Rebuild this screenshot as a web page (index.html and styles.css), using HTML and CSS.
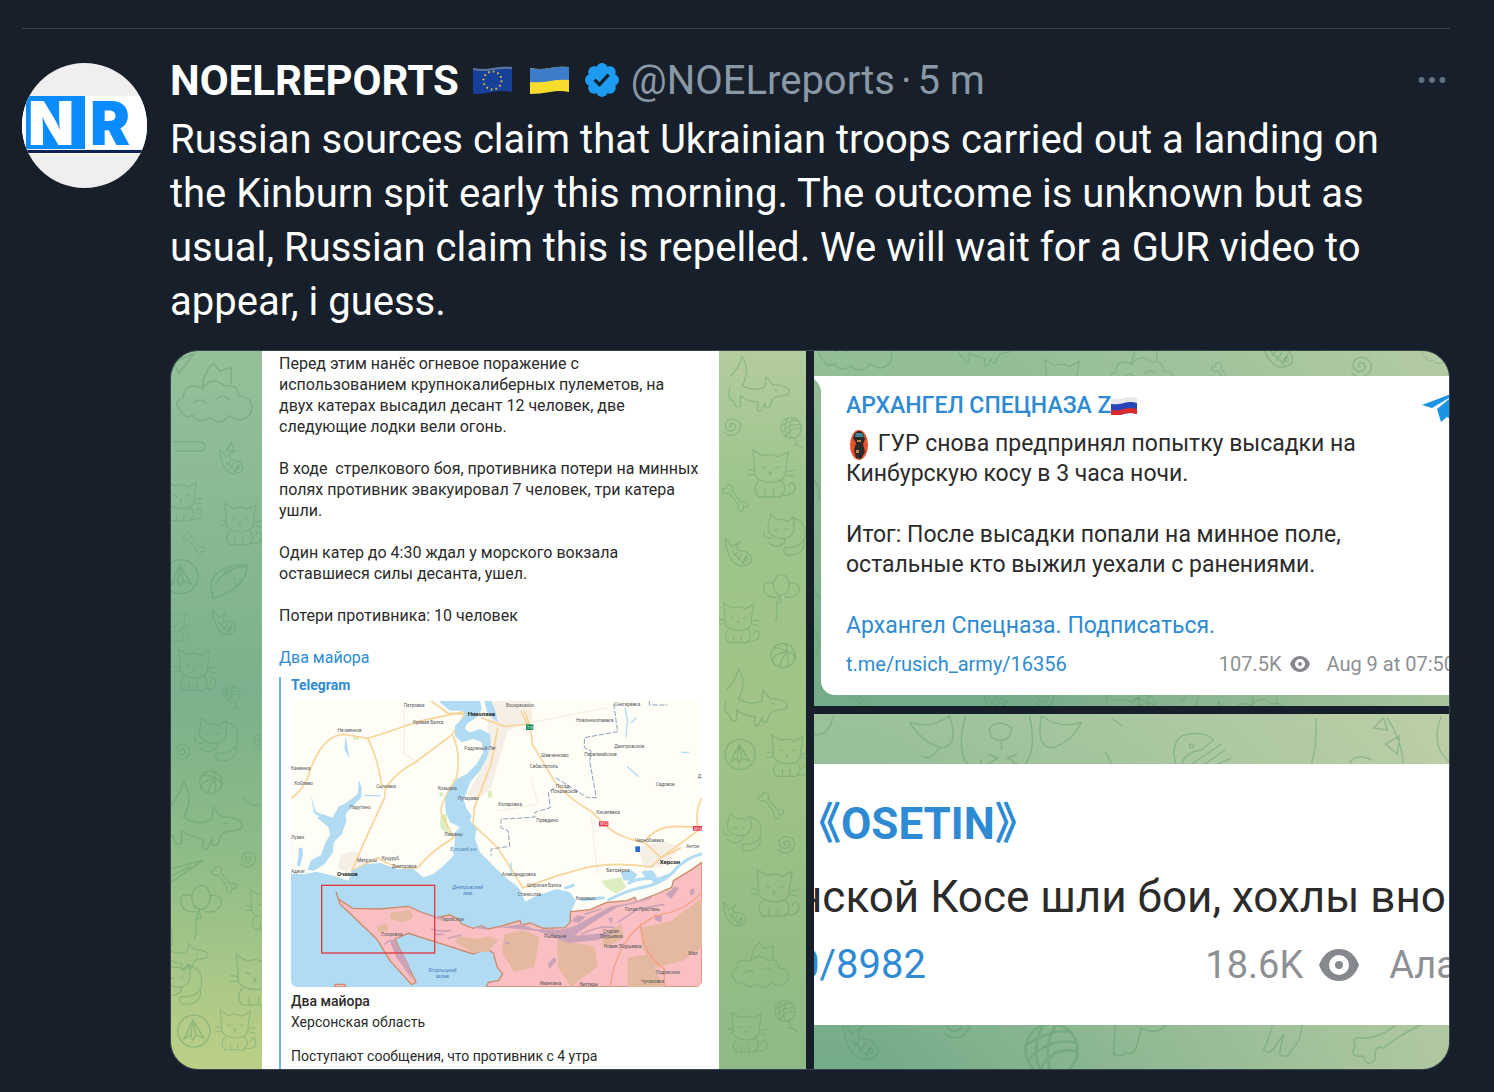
FILE: index.html
```html
<!DOCTYPE html>
<html lang="en">
<head>
  <meta charset="UTF-8" />
  <meta name="viewport" content="width=device-width, initial-scale=1.0" />
  <title>NOELREPORTS</title>
  <link rel="stylesheet" href="styles.css">
</head>
<body>
  <!-- doodles of the chat wallpaper -->
  <svg class="defs" width="0" height="0" aria-hidden="true">
    <symbol id="cat" viewBox="0 0 60 60" overflow="visible">
      <path d="M12 24 L10 6 L22 13 Q31 9 39 14 L51 8 L48 27 Q50 40 36 43 Q18 45 12 34 Z M20 25 l5 2 M36 27 l5 -2 M28 31 q2 3 4 0 M30 33 v3 M4 28 l9 2 M3 35 l9 -1 M50 31 l9 -2 M49 35 l9 2"/>
      <path d="M17 42 Q8 52 17 60 H42 Q52 50 42 41 M42 58 Q62 60 58 46 Q54 40 51 48 M24 60 v-9 M34 60 v-9"/>
    </symbol>
    <symbol id="curl" viewBox="0 0 60 60" overflow="visible">
      <path d="M10 22 L14 5 L23 12 Q30 10 35 14 L44 8 L44 26 Q40 38 26 36 Q12 34 10 22 M40 9 Q62 12 58 36 Q52 50 32 48 M16 36 Q2 36 5 28 M10 40 Q20 52 32 42 Q36 36 26 36 M32 48 Q28 58 40 58 Q60 56 57 38 M18 24 q3 3 6 0 M31 24 q3 2 5 -1"/>
    </symbol>
    <symbol id="dog" viewBox="0 0 70 60" overflow="visible">
      <path d="M0 24 Q10 14 14 0 Q24 16 14 34 Q28 42 40 36 L42 24 L50 34 Q58 32 68 38 Q72 44 64 46 Q50 46 48 54 L46 60 Q40 62 41 54 L36 64 Q30 66 33 54 Q18 52 12 46 L12 58 Q6 62 4 52 Q-4 50 0 36 M52 39 l3 1"/>
    </symbol>
    <symbol id="ball" viewBox="0 0 30 30" overflow="visible">
      <circle cx="15" cy="15" r="14"/>
      <path d="M20 10 Q8 4 4 7 M20 10 Q6 12 2 20 M20 10 Q12 20 11 28 M20 10 Q22 20 20 28 M20 10 Q28 12 29 18 M20 10 Q20 4 17 1"/>
    </symbol>
    <symbol id="yarn" viewBox="0 0 30 30" overflow="visible">
      <circle cx="15" cy="15" r="14"/>
      <path d="M2 12 Q14 4 24 5 M3 20 Q14 8 28 11 M8 27 Q16 12 29 16 M10 3 Q4 14 9 26 M17 2 Q10 14 15 28 M18 28 Q26 34 20 38 Q28 38 32 44"/>
    </symbol>
    <symbol id="spiral" viewBox="0 0 24 24" overflow="visible">
      <path d="M2 18 Q10 26 19 19 Q26 10 18 4 Q8 0 4 8 Q3 16 11 17 Q18 15 15 9 Q10 6 9 11 Q10 13 12 12"/>
    </symbol>
    <symbol id="bone" viewBox="0 0 40 40" overflow="visible">
      <path d="M12 14 Q2 16 3 8 Q6 6 8 9 Q7 1 13 3 Q19 6 16 11 L28 26 Q38 24 37 31 Q34 34 31 31 Q32 40 26 37 Q22 34 24 29 Z"/>
    </symbol>
    <symbol id="fish" viewBox="0 0 40 40" overflow="visible">
      <path d="M4 2 L12 12 L22 5 Q16 9 18 16 Q36 16 34 30 Q22 40 12 28 Q4 18 4 2 M12 18 L28 34 M18 18 L14 23 M24 19 L18 28 M30 21 L23 32"/>
      <circle cx="28" cy="27" r="2"/>
    </symbol>
    <symbol id="plane" viewBox="0 0 34 34" overflow="visible">
      <circle cx="17" cy="17" r="16"/>
      <path d="M16 6 L7 25 L14 21 L16 26 L19 21 L27 24 Z M16 6 L14 21 M16 6 L19 21"/>
    </symbol>
    <symbol id="balloons" viewBox="0 0 50 60" overflow="visible">
      <ellipse cx="24" cy="14" rx="10" ry="13"/>
      <path d="M14 12 Q0 8 2 20 Q6 32 20 29 M34 12 Q48 10 46 22 Q40 32 28 29 M22 28 l-4 10 l6 -2 z M18 38 Q20 48 17 60"/>
    </symbol>
    <symbol id="cloud" viewBox="0 0 80 60" overflow="visible">
      <path d="M4 40 Q-6 30 6 26 Q8 8 26 16 Q36 2 50 14 Q62 10 64 24 Q82 26 76 42 Q66 54 54 44 Q44 56 34 46 Q22 54 16 44 Q8 48 4 40 M16 32 q8 -8 14 0 M40 28 q8 -8 14 0 M26 16 Q28 -4 38 -10 L44 -2 L56 -6 L56 12"/>
    </symbol>
  </svg>

  <main class="timeline">
    <article class="tweet">
      <a class="avatar" href="#" aria-label="NOELREPORTS">
        <svg viewBox="0 0 125 125">
          <rect width="125" height="125" fill="#efefef"/>
          <rect y="33" width="125" height="53" fill="#fff"/>
          <rect x="4" y="33" width="59" height="53" fill="#0a8cff"/>
          <rect y="87" width="125" height="3" fill="#0b2454"/>
          <rect y="90" width="125" height="1" fill="#fff"/>
          <text class="logo" x="6" y="82" fill="#fff">N</text>
          <text class="logo" x="68" y="82" fill="#0a8cff">R</text>
        </svg>
      </a>

      <div class="body">
        <header class="head">
          <a class="name" href="#">NOELREPORTS</a>
          <svg class="flag" viewBox="0 0 39 28" role="img" aria-label="EU">
            <path d="M0 2 Q10 4 20 2 T39 1 V26 Q30 24 20 26 T0 28 Z" fill="#17409a"/>
            <path d="M0 2 Q10 4 20 2 T39 1 V3 Q30 2 20 4 T0 4 Z" fill="#5d7698"/>
            <circle cx="19.500" cy="14.500" r="9" fill="none" stroke="#e3c33c" stroke-width="2" stroke-dasharray="1.600 3.112"/>
          </svg>
          <svg class="flag" viewBox="0 0 39 28" role="img" aria-label="Ukraine">
            <path d="M0 2 Q10 4 20 2 T39 1 V26 Q30 24 20 26 T0 28 Z" fill="#f7dc2e"/>
            <path d="M0 2 Q10 4 20 2 T39 1 V14 Q30 13 20 15 T0 16 Z" fill="#3c7cc8"/>
          </svg>
          <svg class="badge" viewBox="1.75 1.75 20.5 20.5" role="img" aria-label="Verified">
            <path fill="#1d9bf0" d="M22.25 12c0-1.43-.88-2.67-2.19-3.34.46-1.39.2-2.9-.81-3.91s-2.52-1.27-3.91-.81c-.66-1.31-1.91-2.19-3.34-2.19s-2.67.88-3.33 2.19c-1.4-.46-2.91-.2-3.92.81s-1.26 2.52-.8 3.91c-1.31.67-2.2 1.91-2.2 3.34s.89 2.67 2.2 3.34c-.46 1.39-.21 2.9.8 3.91s2.52 1.26 3.91.81c.67 1.31 1.91 2.19 3.34 2.19s2.68-.88 3.34-2.19c1.39.45 2.9.2 3.91-.81s1.27-2.52.81-3.91c1.31-.67 2.19-1.91 2.19-3.34zm-11.71 4.2L6.8 12.46l1.41-1.42 2.26 2.26 4.8-5.23 1.47 1.36-6.2 6.77z"/>
          </svg>
          <a class="handle" href="#">@NOELreports</a>
          <span class="dot">·</span>
          <time class="age">5 m</time>
          <button class="more" type="button" aria-label="More">
            <svg viewBox="0 0 28 8"><circle cx="3.500" cy="4" r="3"/><circle cx="14" cy="4" r="3"/><circle cx="24.500" cy="4" r="3"/></svg>
          </button>
        </header>

        <p class="text">Russian sources claim that Ukrainian troops carried out a landing on<br>the Kinburn spit early this morning. The outcome is unknown but as<br>usual, Russian claim this is repelled. We will wait for a GUR video to<br>appear, i guess.</p>

        <div class="media">
          <section class="shot shot-long">
            <svg class="doodles" viewBox="0 0 636 719" preserveAspectRatio="xMidYMid slice" aria-hidden="true">
              <use href="#cloud" x="6" y="22" width="78" height="58"/>
              <path d="M2 12 L24 2 L8 22 Z M4 100 h28 q5 -6 -2 -9 h-28 M60 92 l4 8 h-8 z"/>
              <use href="#fish" x="46" y="92" width="30" height="40"/>
              <use href="#cat" x="-16" y="126" width="52" height="44"/>
              <use href="#cat" x="46" y="142" width="46" height="58"/>
              <use href="#bone" x="10" y="180" width="26" height="26"/>
              <use href="#plane" x="-8" y="208" width="36" height="36"/>
              <path d="M40 234 Q44 214 76 214 Q78 236 42 248 Z M44 234 Q56 216 74 216"/>
              <use href="#bone" x="52" y="216" width="20" height="20"/>
              <use href="#fish" x="38" y="258" width="32" height="30"/>
              <use href="#cat" x="-14" y="254" width="34" height="40"/>
              <use href="#cat" x="0" y="292" width="46" height="50"/>
              <use href="#yarn" x="52" y="334" width="18" height="18"/>
              <use href="#curl" x="20" y="362" width="48" height="52"/>
              <use href="#spiral" x="2" y="392" width="18" height="18"/>
              <use href="#spiral" x="80" y="382" width="18" height="18"/>
              <use href="#ball" x="28" y="420" width="24" height="24"/>
              <use href="#dog" x="-2" y="426" width="74" height="74"/>
              <path d="M-6 520 L32 510 L0 532 Z M0 526 L20 516 M72 448 q8 10 22 6"/>
              <use href="#spiral" x="68" y="500" width="18" height="18"/>
              <use href="#bone" x="38" y="514" width="30" height="30"/>
              <use href="#balloons" x="8" y="534" width="46" height="56"/>
              <use href="#cat" x="72" y="530" width="44" height="54"/>
              <use href="#dog" x="-14" y="576" width="54" height="42"/>
              <use href="#cat" x="56" y="598" width="56" height="58"/>
              <use href="#curl" x="-18" y="608" width="52" height="48"/>
              <use href="#plane" x="6" y="664" width="34" height="34"/>
              <use href="#cat" x="42" y="644" width="44" height="68"/>

              <use href="#dog" x="560" y="4" width="60" height="54"/>
              <use href="#spiral" x="552" y="66" width="20" height="20"/>
              <use href="#yarn" x="610" y="66" width="22" height="22"/>
              <use href="#cat" x="574" y="90" width="52" height="60"/>
              <use href="#bone" x="550" y="132" width="30" height="30"/>
              <use href="#curl" x="590" y="158" width="46" height="50"/>
              <use href="#fish" x="552" y="186" width="34" height="34"/>
              <use href="#balloons" x="592" y="222" width="40" height="50"/>
              <use href="#cat" x="546" y="242" width="44" height="56"/>
              <use href="#ball" x="600" y="292" width="26" height="26"/>
              <use href="#dog" x="556" y="318" width="62" height="54"/>
              <use href="#plane" x="554" y="388" width="32" height="32"/>
              <use href="#cat" x="594" y="376" width="46" height="54"/>
              <use href="#bone" x="586" y="440" width="30" height="30"/>
              <use href="#curl" x="550" y="456" width="42" height="50"/>
              <use href="#spiral" x="606" y="484" width="20" height="20"/>
              <use href="#cat" x="578" y="512" width="52" height="56"/>
              <use href="#fish" x="550" y="548" width="30" height="34"/>
              <use href="#cloud" x="556" y="600" width="70" height="44"/>
              <use href="#yarn" x="604" y="650" width="22" height="22"/>
              <use href="#cat" x="554" y="652" width="44" height="56"/>
            </svg>
            <div class="note">
              <p>Перед этим нанёс огневое поражение с<br>использованием крупнокалиберных пулеметов, на<br>двух катерах высадил десант 12 человек, две<br>следующие лодки вели огонь.</p>
              <p>В ходе&nbsp; стрелкового боя, противника потери на минных<br>полях противник эвакуировал 7 человек, три катера<br>ушли.</p>
              <p>Один катер до 4:30 ждал у морского вокзала<br>оставшиеся силы десанта, ушел.</p>
              <p>Потери противника: 10 человек</p>
              <p><a href="#">Два майора</a></p>
              <blockquote class="preview">
                <a class="site" href="#">Telegram</a>
                <svg class="map" viewBox="0 0 1233 858" role="img" aria-label="Map">
                  <rect width="1233" height="858" fill="#fefdf6"/>
                  <path fill="#f6efe6" d="M590 0 L720 0 L725 60 L650 90 L600 260 L560 300 L530 280 L590 170 Z M140 500 L150 460 L190 450 L230 480 L180 520 Z M1040 440 L1120 420 L1170 440 L1110 500 L1060 500 Z"/>
                  <path fill="#dcedc0" d="M448 342 l18 -4 l6 50 l10 16 l-16 -6 l-18 -20 z M186 108 h18 v8 h-18 z M930 540 l60 -12 l16 30 l-30 20 l-30 -18 z M590 272 l12 -4 l2 20 l-12 4 z M444 276 l10 -4 l4 12 l-10 4 z"/>

                  <g class="road minor">
                    <path d="M340 20 V160 L390 190 M640 80 L950 20 M900 340 L920 520 M620 330 L740 310 L720 230 M0 400 V470"/>
                  </g>
                  <g class="road">
                    <path d="M0 292 Q34 270 50 230 Q90 100 160 100 L230 112 Q300 90 380 62 L520 32"/>
                    <path d="M230 112 Q260 170 272 252 L284 260 L280 292 L230 400 L182 510"/>
                    <path d="M284 260 Q320 210 370 186 L484 100 L522 40 L470 36 L420 0"/>
                    <path d="M484 100 Q512 160 496 230 Q440 320 452 340 L488 410 Q420 450 380 500 Q320 510 260 470 L182 510"/>
                    <path d="M570 50 L640 76 L710 70 L690 30 M620 80 L600 190 L550 320 L546 370 L620 440 L696 560 L800 524 L870 504 Q960 480 1080 498 L1110 470 L1170 440"/>
                    <path d="M700 30 Q720 70 724 130 L790 240 Q840 300 900 330 L940 370 Q980 410 1060 424 L1110 470 L1233 380 M1060 424 Q1090 376 1160 376 L1233 380 M1220 376 Q1212 330 1233 290"/>
                  </g>
                  <path class="border" d="M1075 0 V12 H1130 M968 8 L980 92 L880 110 V140 L900 150 L896 180 L916 290 L890 290 L790 228 M790 262 L772 274 L778 320 L732 334 V348 L680 352 L630 354 V380 L652 390 L656 436 L600 444 V464"/>

                  <path class="water" d="M0 519 L42 519 77 512 127 524 172 539 182 509 227 489 267 486 317 504 367 504 397 529 427 519 457 494 487 464 492 414 492 394 507 379 477 364 464 334 462 294 472 274 497 234 527 219 557 189 577 154 572 124 547 114 512 124 492 104 492 74 522 44 517 29 477 29 447 4 447 0 567 0 572 24 557 49 527 69 522 84 537 94 567 84 597 99 599 129 587 174 567 209 537 244 527 274 517 294 527 324 542 344 537 359 557 384 552 414 567 454 607 494 637 524 677 554 692 574 702 602 737 584 797 564 837 574 855 599 842 629 837 674 V858 H0 Z"/>
                  <path class="water" d="M50 506 L60 478 L90 462 L104 424 L118 400 L112 378 L78 350 L98 340 L124 350 L136 330 L142 316 L160 310 L200 280 L204 236 L212 262 L210 290 L180 320 L164 340 L166 360 L152 400 L128 424 L126 454 L100 490 L68 510 Z"/>
                  <path class="water" d="M60 284 L68 336 L92 350 L104 344 L74 332 Z M164 104 l-4 40 l16 30 l-6 -32 z M24 440 l10 0 l2 24 l-10 34 l-8 -6 l4 -26 z M580 0 L590 40 L620 64 L612 24 L600 0 Z"/>
                  <path class="stream" d="M1002 20 L1010 60 L1004 110 M1036 50 L1020 66 M1008 196 L1044 228 M1170 154 h24 M220 284 h50 M660 484 v40"/>
                  <path class="river" d="M1233 458 Q1190 470 1160 498 Q1120 550 1040 562 Q1000 572 950 598 M1010 548 Q1040 528 1110 534 M1060 510 L1090 540 L1140 520 M820 562 L850 552 M870 596 L940 590"/>
                  <path class="water" d="M990 514 l30 -8 l20 16 l-16 18 l-26 -2 z M1050 512 l34 -4 l14 18 l-28 12 z"/>

                  <path class="land" d="M135 572 L142 594 185 622 267 624 352 616 397 636 437 649 477 642 502 654 512 669 547 682 572 674 592 684 627 676 687 659 692 672 717 666 757 682 822 680 837 664 839 632 897 626 947 604 1007 599 1032 589 1037 602 1097 579 1142 559 1147 539 1197 509 1233 484 V858 H587 L592 844 622 839 635 819 619 799 612 774 607 756 587 744 547 759 437 724 352 697 312 714 375 844 362 851 297 779 257 714 147 609 Z"/>
                  <path class="land" d="M132 858 v-8 h30 v8 z"/>
                  <path class="tan" d="M300 636 l60 -10 l6 24 l-30 14 l-40 -10 z M258 676 l28 -8 l6 20 l-30 6 z M496 704 l60 10 l36 -8 l30 12 l-32 34 l-44 4 l-50 -30 z M640 700 l60 -12 l46 20 l-16 90 l-60 14 l-38 -60 z M800 716 l110 20 l10 60 l-80 62 l-40 -60 z M1050 680 l90 -20 l93 -70 v150 l-60 40 l-80 20 l-40 -60 z M1010 770 l60 -10 l50 98 h-110 z M930 700 l60 -30 l10 40 l-60 30 z"/>
                  <path class="mud" d="M296 718 l16 -2 l40 70 l12 50 l-50 -70 z M610 680 l80 -10 l40 14 l80 2 l40 -10 l110 -60 l30 -4 l-100 62 l-40 30 l120 -10 l-50 24 l-90 8 l-90 -36 l-100 -10 z M840 660 l20 -18 l24 6 l-20 18 z M1124 580 l30 -24 l10 6 l-24 32 z M1090 640 l24 4 l-4 20 l-18 -6 z M950 650 l16 0 l-4 18 z M770 790 l20 -22 l6 12 l-20 24 z M1196 566 l14 -4 v16 l-12 6 z M352 618 l52 22 l50 12 l-10 4 l-60 -24 z M549 680 l26 -6 l14 12 z"/>
                  <path class="marsh" d="M420 684 q30 10 60 4 M430 700 h30 M470 712 l40 -10 M280 730 l20 -14 M640 724 l18 4 M870 700 q60 -30 100 -20 M880 640 l50 -16 M960 620 q60 -10 120 -30 M980 664 l60 -40 l80 -14"/>
                  <path class="redroad" d="M1233 574 Q1180 630 1110 640 Q1020 670 980 770 Q962 810 958 858 M1048 668 Q1054 760 1120 804 V858"/>

                  <g class="place">
                    <text x="338" y="18">Петровка</text><text x="366" y="70">Кривая Балка</text>
                    <text x="140" y="92">Нечаянное</text><text x="0" y="208">Каменка</text>
                    <text x="10" y="252">Коблево</text><text x="256" y="260">Сычовка</text>
                    <text x="176" y="324">Парутино</text><text x="0" y="414">Лузан</text>
                    <text x="0" y="515">Аджиг.</text><text x="198" y="482">Матросы</text>
                    <text x="272" y="476">Куцуруб</text><text x="302" y="501">Дмитровка</text>
                    <text x="440" y="266">Козырка</text><text x="500" y="298">Лупарево</text>
                    <text x="460" y="406">Лиманы</text><text x="520" y="147">Радужный Ляг</text>
                    <text x="645" y="18">Воскресенск</text><text x="970" y="14">Снигирёвка</text>
                    <text x="855" y="64">Новониколаевка</text><text x="970" y="142">Дмитровское</text>
                    <text x="880" y="166">Первомайское</text><text x="750" y="168">Шевченково</text>
                    <text x="716" y="201">Себастополь</text><text x="794" y="260">Посад-</text>
                    <text x="780" y="276">Покровское</text><text x="622" y="316">Коларовка</text>
                    <text x="736" y="362">Правдино</text><text x="916" y="340">Киселёвка</text>
                    <text x="1094" y="256">Садовое</text><text x="1032" y="422">Чернобаевка</text>
                    <text x="1186" y="440">Антон</text><text x="946" y="512">Белозёрка</text>
                    <text x="632" y="526">Александровка</text><text x="708" y="559">Широкая Балка</text>
                    <text x="680" y="584">Станислав</text><text x="854" y="598">Кизомыс</text>
                    <text x="450" y="659">Геройское</text><text x="270" y="704">Покровка</text>
                    <text x="760" y="712">Рыбальче</text><text x="936" y="696">Старая</text>
                    <text x="926" y="712">Збурьевка</text><text x="938" y="742">Новая Збурьевка</text>
                    <text x="1002" y="631">Голая Пристань</text><text x="1192" y="762">Мал</text>
                    <text x="1094" y="818">Подлесное</text><text x="1050" y="846">Чулаковка</text>
                    <text x="746" y="853">Ивановка</text><text x="866" y="854">Бехтеры</text>
                    <text x="1220" y="232">Д</text>
                  </g>
                  <g class="city">
                    <text x="530" y="46">Николаев</text><text x="138" y="524">Очаков</text><text x="1106" y="490">Херсон</text>
                  </g>
                  <g class="sea">
                    <text x="478" y="450">Бугский л-н</text><text x="484" y="564">Днепровский</text><text x="516" y="582">лим.</text>
                    <text x="412" y="812">Ягорлыцкий</text><text x="434" y="830">залив</text>
                  </g>
                  <g class="tag">
                    <rect x="705" y="70" width="22" height="17" fill="#17905c"/><text x="708" y="84">Т15</text>
                    <rect x="924" y="361" width="28" height="15" fill="#e4344a"/><text x="928" y="373">М14</text>
                    <rect x="1206" y="375" width="27" height="14" fill="#e4344a"/><text x="1210" y="386">М14</text>
                    <rect x="1033" y="436" width="14" height="17" fill="#2a67cf"/>
                  </g>
                  <rect class="area" x="92" y="553" width="339" height="203"/>
                </svg>
                <strong>Два майора</strong>
                <p>Херсонская область</p>
                <p class="last">Поступают сообщения, что противник с 4 утра</p>
              </blockquote>
            </div>
          </section>

          <section class="shot shot-arch">
            <svg class="doodles" viewBox="0 0 636 356" preserveAspectRatio="xMidYMid slice" aria-hidden="true">
              <use href="#cloud" x="-4" y="-28" width="94" height="56"/>
              <use href="#dog" x="146" y="-36" width="54" height="50"/>
              <use href="#cat" x="222" y="4" width="52" height="50"/>
              <use href="#cloud" x="290" y="0" width="80" height="50"/>
              <use href="#bone" x="396" y="10" width="30" height="30"/>
              <use href="#fish" x="440" y="-18" width="50" height="40"/>
              <use href="#spiral" x="536" y="4" width="24" height="24"/>
              <use href="#cloud" x="606" y="-20" width="60" height="40"/>
              <path d="M0 130 q8 8 4 20 M0 240 l6 8 M0 280 q8 10 2 24"/>
              <use href="#bone" x="34" y="338" width="30" height="30"/>
              <use href="#fish" x="166" y="334" width="34" height="34"/>
              <use href="#spiral" x="220" y="336" width="22" height="22"/>
              <use href="#cat" x="284" y="340" width="50" height="50"/>
              <use href="#ball" x="318" y="344" width="26" height="26"/>
              <use href="#dog" x="366" y="330" width="66" height="54"/>
              <use href="#cloud" x="410" y="342" width="80" height="50"/>
            </svg>
            <div class="card">
              <svg class="tail" viewBox="0 0 8 24" aria-hidden="true"><path d="M0 0 H8 V24 Q8 8 0 3 Z" fill="#fff"/></svg>
              <div class="row">
                <h3><a href="#">АРХАНГЕЛ СПЕЦНАЗА Z</a></h3>
                <svg class="ru" viewBox="0 0 26 18" role="img" aria-label="Russia">
                  <path d="M0 1 Q7 3 13 1 T26 1 V17 Q19 15 13 17 T0 18 Z" fill="#e8e8ec"/>
                  <path d="M0 7 Q7 8 13 6 T26 6 V17 Q19 15 13 17 T0 18 Z" fill="#2545b8"/>
                  <path d="M0 13 Q7 14 13 12 T26 12 V17 Q19 15 13 17 T0 18 Z" fill="#d92b2b"/>
                </svg>
                <svg class="tg" viewBox="0 0 42 34" role="img" aria-label="Telegram"><path fill="#1c93e3" d="M0 16 L42 0 L36 34 L25 28 L19 33 L15 20 L32 6 L10 19 Z"/></svg>
              </div>
              <p><svg class="patch" viewBox="0 0 18 30" aria-hidden="true">
                  <ellipse cx="9" cy="15" rx="9" ry="15" fill="#e8502d"/>
                  <path d="M5 3 Q9 -1 13 3 L15 9 L13 14 L15 22 L11 29 L6 28 L4 20 L6 13 L3 8 Z" fill="#2b2a28"/>
                  <path d="M6 3 h6 l2 4 h-9 z" fill="#3f8799"/><path d="M7 10 h4 v2 h-4 z M6 20 h3 v3 h-3 z" fill="#b98a52"/>
                </svg> ГУР снова предпринял попытку высадки на<br>Кинбурскую косу в 3 часа ночи.</p>
              <p>Итог: После высадки попали на минное поле,<br>остальные кто выжил уехали с ранениями.</p>
              <p><a href="#">Архангел Спецназа. Подписаться.</a></p>
              <footer class="meta">
                <a href="#">t.me/rusich_army/16356</a>
                <span class="views">107.5K</span>
                <svg class="eye" viewBox="0 0 20 16" aria-hidden="true"><path fill-rule="evenodd" d="M10 0 Q17 0 20 8 Q17 16 10 16 Q3 16 0 8 Q3 0 10 0 Z M10 3 a5 5 0 1 0 0 10 a5 5 0 1 0 0 -10 Z M10 6 a2 2 0 1 1 0 4 a2 2 0 1 1 0 -4 Z"/></svg>
                <time>Aug 9 at 07:50</time>
              </footer>
            </div>
          </section>

          <section class="shot shot-osetin">
            <svg class="doodles" viewBox="0 0 636 355" preserveAspectRatio="xMidYMid slice" aria-hidden="true">
              <path d="M0 20 q14 4 20 -18 M96 8 q20 8 40 -6 q10 30 -8 32 q-20 -6 -32 -26 M126 34 q-10 14 -18 8 M268 8 q-20 8 -40 -6 q-6 30 10 32 q20 -6 30 -26 M152 2 q-10 36 4 50 q10 4 12 -6 M216 2 q8 36 -6 50 q-8 4 -12 -6 M176 14 q10 -10 22 0 q0 12 -11 12 q-12 0 -11 -12 M188 26 v10 M174 40 l10 4 l-10 6 M204 40 l-10 4 l10 6 M298 4 l10 8 M292 38 l6 12"/>
              <path d="M362 50 Q356 22 376 20 Q392 18 400 26 L388 36 Q372 38 368 50 M378 50 l30 -20 M388 52 l24 -16 M400 52 l18 -8 M502 4 Q504 30 498 50 M560 14 l10 -10 l4 12 z M572 30 l14 -8 l-2 18 z M574 4 Q588 26 590 50 M536 50 q6 -12 22 -4 M628 2 q-12 30 8 46"/>
              <circle cx="378" cy="32" r="2"/>
              <use href="#fish" x="24" y="306" width="48" height="46"/>
              <use href="#spiral" x="128" y="296" width="30" height="30"/>
              <use href="#yarn" x="210" y="308" width="56" height="56"/>
              <path d="M302 306 l-2 34 q8 4 12 -2 q6 4 10 -2 l6 -22 q20 10 28 -10 M460 306 q-4 18 -10 30 q6 6 12 -4 l8 -12 l-4 20 q8 6 12 -4 q12 -12 10 -28"/>
              <path d="M614 308 Q590 318 570 334 Q560 330 562 346 Q552 354 550 342 Q534 344 542 332 Q536 322 550 324 Q570 324 590 304"/>
            </svg>
            <div class="card">
              <h3><a href="#">《OSETIN》</a></h3>
              <p>нской Косе шли бои, хохлы вно</p>
              <footer class="meta">
                <a href="#">0/8982</a>
                <span class="views">18.6K</span>
                <svg class="eye" viewBox="0 0 20 16" aria-hidden="true"><path fill-rule="evenodd" d="M10 0 Q17 0 20 8 Q17 16 10 16 Q3 16 0 8 Q3 0 10 0 Z M10 3 a5 5 0 1 0 0 10 a5 5 0 1 0 0 -10 Z M10 6 a2 2 0 1 1 0 4 a2 2 0 1 1 0 -4 Z"/></svg>
                <span>Ала</span>
              </footer>
            </div>
          </section>
        </div>
      </div>
    </article>
  </main>
</body>
</html>
```

FILE: styles.css
```css
* { box-sizing: border-box; }
body {
  margin: 0;
  background: #17202a;
  color: #fff;
  font-family: Roboto, "Noto Sans CJK SC", sans-serif;
}
a { color: inherit; text-decoration: none; }
p, h3, blockquote { margin: 0; }
svg { display: block; }
.defs { position: absolute; }

.timeline { padding: 28px 44px 22px 22px; }
.tweet {
  display: flex;
  gap: 23px;
  padding-top: 24px;
  border-top: 1px solid #38444d;
}
.avatar {
  flex: none;
  width: 125px;
  height: 125px;
  margin-top: 10px;
  border-radius: 50%;
  overflow: hidden;
}
.logo { font: 900 60px Inter, sans-serif; }
.body { flex: 1; min-width: 0; }

.head {
  display: flex;
  align-items: center;
  height: 54px;
  font-size: 40px;
  white-space: nowrap;
  color: #8b98a5;
}
.name { font-size: 42px; font-weight: 700; color: #fff; margin-right: 14px; }
.flag { width: 39px; height: 28px; margin-right: 18px; }
.badge { width: 34px; height: 34px; margin-right: 12px; }
.flag + .badge { margin-left: -2px; }
.dot { margin: 0 6px; }
.more {
  margin-left: auto;
  padding: 8px 4px;
  background: none;
  border: none;
  cursor: pointer;
}
.more svg { width: 28px; height: 8px; fill: #5f7080; }
.text {
  margin-top: 6px;
  font-size: 40px;
  line-height: 54px;
  white-space: nowrap;
}

.media {
  display: grid;
  grid-template-columns: 1fr 1fr;
  grid-template-rows: 1fr 1fr;
  gap: 8px;
  aspect-ratio: 16 / 9;
  margin-top: 21px;
  border: 1px solid #38444d;
  border-radius: 28px;
  overflow: hidden;
}
.shot {
  display: grid;
  min-width: 0;
  min-height: 0;
  overflow: hidden;
  color: #2b2b2b;
}
.shot > * { grid-area: 1 / 1; min-width: 0; min-height: 0; }
.shot a { color: #2e8bd3; }
.doodles {
  width: 100%;
  height: 100%;
  fill: none;
  stroke: #5d9c6c;
  stroke-opacity: 0.4;
  stroke-width: 1.5px;
}

/* long post with the map */
.shot-long {
  grid-row: 1 / 3;
  background:
    linear-gradient(180deg, #95c09a 0%, #7bb18c 48%, #8fbc88 70%, #bcd087 100%) left / 50% 100% no-repeat,
    linear-gradient(180deg, #b4cc9e 0%, #9dc48c 20%, #a2c486 50%, #8fb985 100%) right / 50% 100% no-repeat;
}
.note {
  margin: 0 87px 0 91px;
  padding: 2px 17px 0;
  background: #fff;
  font-size: 16px;
  line-height: 21px;
  white-space: nowrap;
  overflow: hidden;
}
.note > p { margin-bottom: 21px; }
.note > p:nth-of-type(5) { margin-bottom: 9px; }
.preview {
  padding-left: 10px;
  border-left: 2px solid #6cb2ec;
  font-size: 14px;
}
.site { display: block; font-weight: 700; line-height: 16px; }
.map { width: 100%; margin: 8px 0 4px; border-radius: 6px; }
.preview strong { display: block; font-weight: 500; line-height: 21px; }
.preview .last { margin-top: 13px; padding-bottom: 20px; }

.road { fill: none; stroke: #f6d49a; stroke-width: 5; }
.minor { stroke: #f7f0e0; stroke-width: 4; }
.border { fill: none; stroke: #8ea2b8; stroke-width: 3; stroke-dasharray: 16 5; }
.water { fill: #b0dbf3; }
.river, .stream { fill: none; stroke: #b0dbf3; stroke-width: 9; }
.stream { stroke-width: 4; }
.land { fill: #f9bfc2; stroke: #cc8a68; stroke-width: 4; }
.tan { fill: #e5b9a0; }
.mud { fill: #cba3b8; }
.marsh { fill: none; stroke: #cba3b8; stroke-width: 5; }
.redroad { fill: none; stroke: #f7a184; stroke-width: 4; }
.place, .city, .sea { font-size: 14px; fill: #55585c; }
.city { font-size: 18px; font-weight: 700; fill: #222; }
.sea { font-size: 15px; font-style: italic; fill: #4a83bd; }
.tag { font-size: 11px; fill: #fff; }
.area { fill: none; stroke: #e0393f; stroke-width: 4; }

/* cropped channel posts */
.card { background: #fff; white-space: nowrap; }
.card h3 { font-weight: 500; }
.meta { display: flex; align-items: center; color: #8d9094; }
.meta .views { margin-left: auto; }
.eye { fill: #85888c; }

.shot-arch {
  background: linear-gradient(90deg, rgba(201, 212, 172, 0) 30%, rgba(201, 212, 172, 0.6)), linear-gradient(180deg, #94be98, #74ab88);
}
.shot-arch .card {
  position: relative;
  margin: 25px -32px 11px 7px;
  padding: 14px 16px 0 25px;
  border-radius: 0 0 0 14px;
  font-size: 23px;
  line-height: 30px;
}
.tail { position: absolute; left: -7px; top: 0; width: 8px; height: 24px; }
.row { display: flex; align-items: center; height: 32px; margin-bottom: 7px; }
.row h3 { font-size: 23px; }
.ru { width: 26px; height: 18px; }
.tg { width: 42px; height: 34px; margin: 0 1px 0 auto; }
.shot-arch p { margin-bottom: 31px; }
.shot-arch p:nth-of-type(3) { margin-bottom: 8px; }
.patch { display: inline-block; width: 18px; height: 30px; margin: -4px 4px; vertical-align: middle; }
.shot-arch .meta { padding-right: 10px; font-size: 20px; }
.shot-arch .eye { width: 20px; height: 16px; margin: 0 16px 0 9px; }

.shot-osetin {
  background: linear-gradient(90deg, rgba(201, 212, 172, 0) 10%, rgba(201, 212, 172, 0.7)), linear-gradient(180deg, #9cc29c, #74ab88);
}
.shot-osetin .card {
  margin: 50px -8px 44px -17px;
  padding-top: 34px;
}
.shot-osetin h3 { font-size: 44px; font-weight: 700; line-height: 52px; }
.shot-osetin p { margin: 20px 0 14px; font-size: 44px; line-height: 54px; }
.shot-osetin .meta { font-size: 38px; line-height: 54px; }
.shot-osetin .meta a { font-size: 40px; }
.shot-osetin .eye { width: 40px; height: 32px; margin: 0 30px 0 16px; }
```
